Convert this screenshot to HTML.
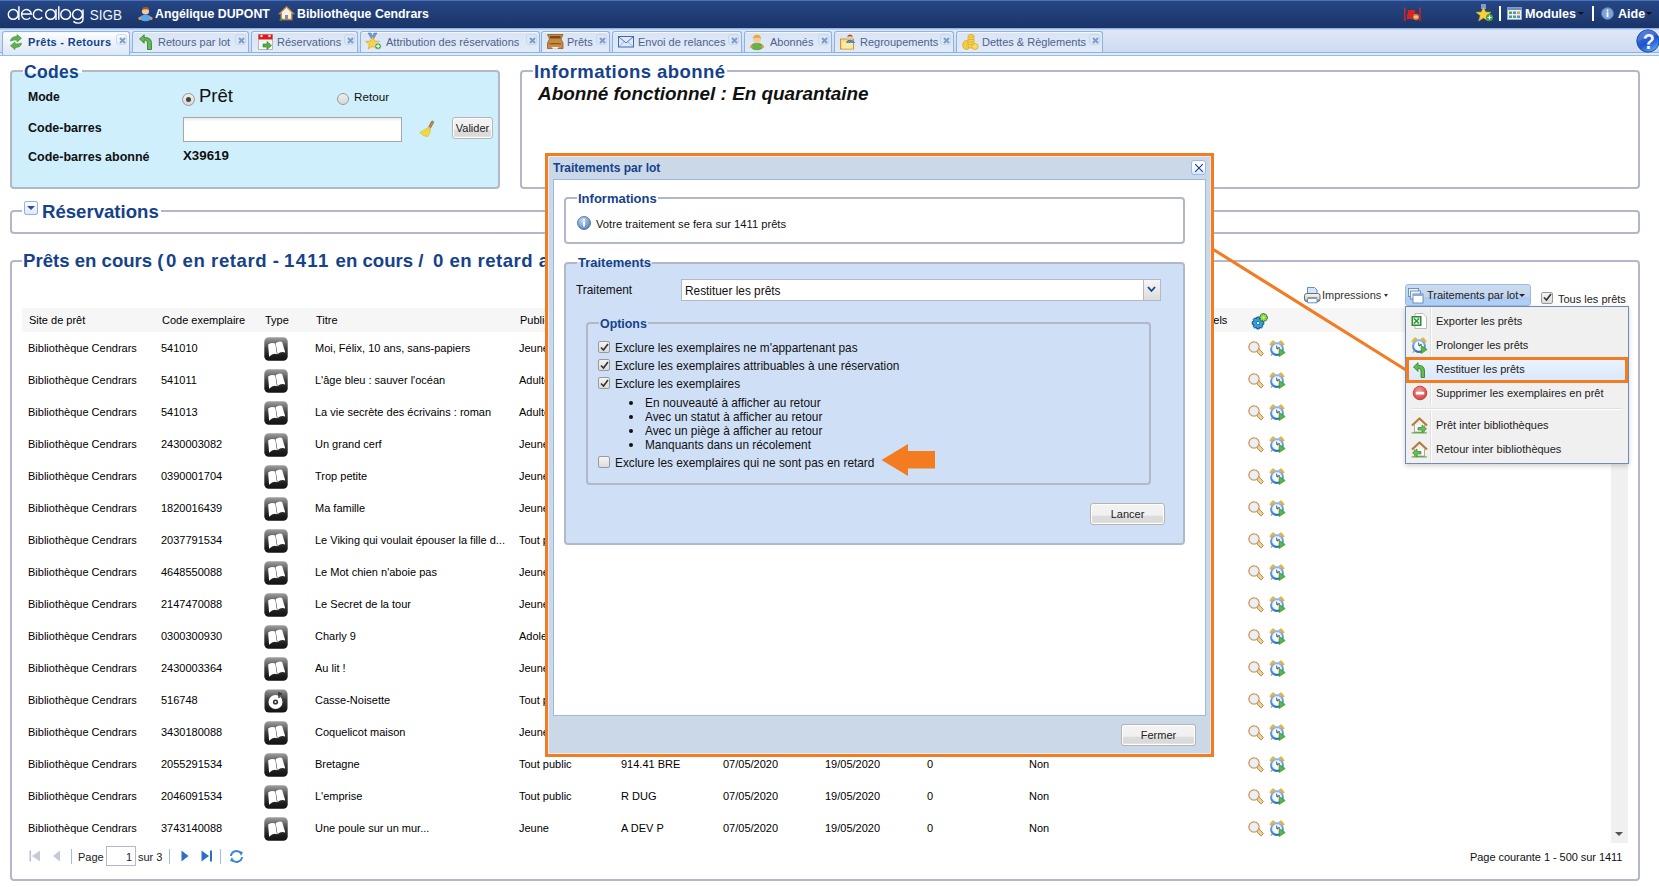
<!DOCTYPE html>
<html><head><meta charset="utf-8"><style>
*{box-sizing:border-box}
html,body{margin:0;padding:0;width:1659px;height:887px;overflow:hidden;background:#fff;font-family:"Liberation Sans",sans-serif}
body{position:relative}
.a{position:absolute;white-space:nowrap;line-height:1}
svg{position:absolute;overflow:visible}
#hdr{position:absolute;left:0;top:0;width:1659px;height:28px;background:linear-gradient(#264785,#1a3468);border-top:1px solid #4d74b8}
#tabbar{position:absolute;left:0;top:28px;width:1659px;height:24px;background:linear-gradient(#dfe8f6,#cddaf0);border-top:1px solid #92b5e5;box-shadow:inset 0 1px #bcd2ef}
#spacer{position:absolute;left:0;top:52px;width:1659px;height:4px;background:#e1ebfa;border-top:1px solid #8db2e3;border-bottom:1px solid #99bbe8}
.tab{position:absolute;top:31px;height:21px;border:1px solid #8db2e3;border-bottom:none;border-radius:3px 3px 0 0;background:linear-gradient(#d9e5f5,#e1ebf9);box-shadow:inset 0 1px #f4f8fd;font-size:11px;color:#50608c}
.tab.act{background:linear-gradient(#ffffff,#f4f8fd 20%,#dce8f8);height:24px;color:#15428b;font-weight:bold;font-size:11px;letter-spacing:0.3px}
.tab .t{position:absolute;top:5px;line-height:1;white-space:nowrap}
.tab .x{position:absolute;top:2px;width:11px;height:11px;border:1px solid #c5d8f0;border-radius:3px;}
.fs{position:absolute;border:2px solid #b3b8c9;border-radius:4px}
.lg{position:absolute;background:#fff;color:#15428b;font-weight:bold;white-space:nowrap;line-height:1;padding:0 1px}
.cell{position:absolute;font-size:11px;color:#000;white-space:nowrap;line-height:1}
.hd{position:absolute;font-size:11px;color:#000;white-space:nowrap;line-height:1;top:315px}
.btn{position:absolute;border:1px solid #b4b4b4;border-radius:3px;box-shadow:inset 0 0 0 1px #fff;background:linear-gradient(#f3f3f3 0%,#f0f0f0 57%,#dcdcdc 59%,#dadada 88%,#efefef 100%);font-size:11px;color:#222;text-align:center;line-height:1}
.mi{position:absolute;left:1436px;font-size:11px;color:#222;white-space:nowrap;line-height:1}
.dt{position:absolute;font-size:11.85px;color:#111;white-space:nowrap;line-height:1}
.cb{position:absolute;width:12px;height:12px;border:1px solid #9a9a9a;border-radius:2px;background:linear-gradient(#f4f4f4,#dcdcdc)}
</style></head><body>
<div id="hdr"></div>
<svg style="left:0;top:0" width="130" height="28" viewBox="0 0 130 28"><g stroke="#fff" stroke-width="1.45" fill="none">
<circle cx="13.2" cy="14.4" r="4.9"/><path d="M18.9 6.2 V19.9"/>
<path d="M21.5 14 H31.3 A4.9 4.9 0 1 0 30.2 17.6"/>
<path d="M42.2 11.5 A4.9 4.9 0 1 0 42.2 17.3"/>
<circle cx="50.6" cy="14.4" r="4.9"/><path d="M56 9.2 V19.9"/>
<path d="M58.8 6.2 V19.8"/>
<circle cx="65.7" cy="14.4" r="4.9"/>
<circle cx="77.5" cy="14.4" r="4.9"/><path d="M83 9.6 V19 Q83 23.1 78.2 23.1 Q75.2 23.1 73.4 21.4"/>
</g><text x="89.8" y="20" font-family="Liberation Sans" font-size="15" fill="#eef1f7" textLength="32.2" lengthAdjust="spacingAndGlyphs">SIGB</text></svg>
<svg style="left:138px;top:6px" width="15" height="15" viewBox="0 0 15 15"><ellipse cx="7.5" cy="12" rx="6" ry="3.2" fill="#58a6ee"/><circle cx="1.8" cy="12.5" r="1.4" fill="#f19a3e"/><circle cx="13.2" cy="12.5" r="1.4" fill="#f19a3e"/><circle cx="7.5" cy="5" r="3.6" fill="#f5c9a0"/><path d="M3.8 4.5 Q4 0.8 7.5 0.8 Q11 0.8 11.2 4.5 Q9 3 7.5 3.4 Q6 3 3.8 4.5Z" fill="#9a5a28"/></svg>
<div class="a" style="left:155px;top:8px;font-size:12.3px;font-weight:bold;color:#fff">Angélique DUPONT</div>
<svg style="left:279px;top:6px" width="15" height="15" viewBox="0 0 15 15"><path d="M7.5 0.8 L14.5 7.5 L12.8 7.5 L12.8 13.5 L2.2 13.5 L2.2 7.5 L0.5 7.5 Z" fill="#f4f0e8" stroke="#c9853d" stroke-width="1.3"/><rect x="6" y="9" width="3" height="4.5" fill="#8a8a8a"/><path d="M0.5 14 L4 13.5" stroke="#3aa040" stroke-width="1.3"/></svg>
<div class="a" style="left:297px;top:8px;font-size:12.3px;font-weight:bold;color:#fff">Bibliothèque Cendrars</div>
<svg style="left:1404px;top:8px" width="17" height="13" viewBox="0 0 17 13"><path d="M1.5 0.5 L0.8 0.5 L0.8 12 L2 12 M15 0.5 L16 0.5 L16 12 L15 12" stroke="#e02020" stroke-width="1.4" fill="none"/><rect x="4" y="2" width="7" height="6" fill="#e02020"/><rect x="3" y="6" width="9" height="5" fill="#d02828"/><circle cx="12" cy="9" r="3" fill="#f08a30"/><rect x="10.3" y="8.5" width="3.4" height="1" fill="#fff"/></svg>
<svg style="left:1476px;top:4px" width="18" height="18" viewBox="0 0 18 18"><rect x="5" y="0" width="5" height="5" fill="#7a9ccf"/><path d="M7.5 3 L9.6 8 L15 8.3 L10.8 11.6 L12.3 17 L7.5 14 L2.7 17 L4.2 11.6 L0 8.3 L5.4 8 Z" fill="#f6d23c" stroke="#d9a21a" stroke-width="0.6"/><circle cx="13.5" cy="13.5" r="3.5" fill="#3aa53a"/><path d="M13.5 11.5 V15.5 M11.5 13.5 H15.5" stroke="#fff" stroke-width="1.2"/></svg>
<div class="a" style="left:1499px;top:6px;width:2px;height:15px;background:#fff"></div>
<svg style="left:1507px;top:7px" width="15" height="13" viewBox="0 0 15 13"><rect x="0.5" y="0.5" width="14" height="12" fill="#e8eef8" stroke="#9ab" stroke-width="1"/><rect x="0.5" y="0.5" width="14" height="2.5" fill="#6f8fc0"/><rect x="2" y="4.5" width="3" height="2.5" fill="#58a840"/><rect x="6" y="4.5" width="3" height="2.5" fill="#4a8fd8"/><rect x="10" y="4.5" width="3" height="2.5" fill="#e8a030"/><rect x="2" y="8.5" width="3" height="2.5" fill="#4a8fd8"/><rect x="6" y="8.5" width="3" height="2.5" fill="#58a840"/><rect x="10" y="8.5" width="3" height="2.5" fill="#4a8fd8"/></svg>
<div class="a" style="left:1525px;top:8px;font-size:12.6px;font-weight:bold;color:#fff">Modules</div>
<div class="a" style="left:1578px;top:12px;width:0;height:0;border-left:3px solid transparent;border-right:3px solid transparent;border-top:3.5px solid #0a0f1a"></div>
<div class="a" style="left:1592px;top:6px;width:2px;height:15px;background:#fff"></div>
<svg style="left:1601px;top:7px" width="13" height="13" viewBox="0 0 13 13"><circle cx="6.5" cy="6.5" r="6" fill="#7ea4d4" stroke="#4c78b8" stroke-width="0.8"/><circle cx="6.5" cy="3.5" r="1" fill="#fff"/><rect x="5.6" y="5.2" width="1.8" height="5" fill="#fff"/></svg>
<div class="a" style="left:1618px;top:8px;font-size:12.6px;font-weight:bold;color:#fff">Aide</div>
<div class="a" style="left:1646px;top:12px;width:0;height:0;border-left:3px solid transparent;border-right:3px solid transparent;border-top:3.5px solid #0a0f1a"></div>
<div id="tabbar"></div>
<div id="spacer"></div>
<div class="tab act" style="left:2px;top:31px;width:128px"><div class="t" style="left:25px">Prêts - Retours</div><div class="x" style="left:113px"><svg style="left:1.5px;top:1.5px" width="7" height="7" viewBox="0 0 7 7"><path d="M1 1 L6 6 M6 1 L1 6" stroke="#7f9bc9" stroke-width="2"/></svg></div></div>
<svg style="left:8px;top:34px" width="17" height="17" viewBox="0 0 17 17"><path d="M2.5 7 Q3 2.5 9 2.5 L9 0.5 L13.5 4.3 L9 8 L9 6 Q5 5.8 2.5 7Z" fill="#62b24e" stroke="#3a8a2e" stroke-width="0.6"/><path d="M13.5 9 Q13 13.5 7 13.5 L7 15.5 L2.5 11.7 L7 8 L7 10 Q11 10.2 13.5 9Z" fill="#62b24e" stroke="#3a8a2e" stroke-width="0.6"/></svg>
<div class="tab" style="left:132px;top:31px;width:117px"><div class="t" style="left:25px">Retours par lot</div><div class="x" style="left:102px"><svg style="left:1.5px;top:1.5px" width="7" height="7" viewBox="0 0 7 7"><path d="M1 1 L6 6 M6 1 L1 6" stroke="#7f9bc9" stroke-width="2"/></svg></div></div>
<svg style="left:139px;top:34px" width="14" height="16" viewBox="0 0 14 16"><path d="M8.5 15.5 V9 Q8.5 6 5.8 6 H5.2 V9.2 L0.6 5 L5.2 0.8 V3.6 H6.2 Q12.5 3.6 12.5 9.5 V15.5 Z" fill="#66b850" stroke="#2b7a22" stroke-width="0.8"/></svg>
<div class="tab" style="left:251px;top:31px;width:107px"><div class="t" style="left:25px">Réservations</div><div class="x" style="left:92px"><svg style="left:1.5px;top:1.5px" width="7" height="7" viewBox="0 0 7 7"><path d="M1 1 L6 6 M6 1 L1 6" stroke="#7f9bc9" stroke-width="2"/></svg></div></div>
<svg style="left:258px;top:34px" width="15" height="16" viewBox="0 0 15 16"><rect x="0.5" y="0.5" width="14" height="15" fill="#f6f6f6" stroke="#aaa" stroke-width="0.8"/><rect x="0.5" y="0.5" width="14" height="5" fill="#e01818"/><circle cx="3.5" cy="2" r="1.2" fill="#eee"/><circle cx="11.5" cy="2" r="1.2" fill="#eee"/><path d="M5 10 H9 V7.5 L13.5 11.5 L9 15.5 V13 H5 Z" fill="#59b23e" stroke="#2b7a22" stroke-width="0.6"/></svg>
<div class="tab" style="left:360px;top:31px;width:180px"><div class="t" style="left:25px">Attribution des réservations</div><div class="x" style="left:165px"><svg style="left:1.5px;top:1.5px" width="7" height="7" viewBox="0 0 7 7"><path d="M1 1 L6 6 M6 1 L1 6" stroke="#7f9bc9" stroke-width="2"/></svg></div></div>
<svg style="left:365px;top:33px" width="17" height="17" viewBox="0 0 17 17"><path d="M3 0 H6 L7.5 3.5 L9 0 H12 L8.5 6 H6.5 Z" fill="#6a98d0" stroke="#4a78b8" stroke-width="0.5"/><path d="M7.5 3.5 L9.5 8 L14.5 8.4 L10.6 11.5 L12 16 L7.5 13.5 L3 16 L4.4 11.5 L0.5 8.4 L5.5 8 Z" fill="#f7d24a" stroke="#d8a020" stroke-width="0.6"/><circle cx="13" cy="13.2" r="3.3" fill="#3b9a3b" stroke="#fff" stroke-width="0.6"/><path d="M13 11.2 V15.2 M11 13.2 H15" stroke="#fff" stroke-width="1.2"/></svg>
<div class="tab" style="left:541px;top:31px;width:69px"><div class="t" style="left:25px">Prêts</div><div class="x" style="left:54px"><svg style="left:1.5px;top:1.5px" width="7" height="7" viewBox="0 0 7 7"><path d="M1 1 L6 6 M6 1 L1 6" stroke="#7f9bc9" stroke-width="2"/></svg></div></div>
<svg style="left:547px;top:34px" width="17" height="16" viewBox="0 0 17 16"><path d="M0.5 0.5 H16 L14 5 L16 9 V14.5 H0.5 V9 L2.5 5 Z" fill="#c98a44" stroke="#8a5a22" stroke-width="0.8"/><rect x="3" y="2" width="10.5" height="2.5" fill="#7a4a1a"/><rect x="2.5" y="9" width="11.5" height="1.3" fill="#8a5a22"/><path d="M5 13 Q8 16.5 11.5 13" stroke="#ddd" stroke-width="1.5" fill="#fff"/></svg>
<div class="tab" style="left:612px;top:31px;width:130px"><div class="t" style="left:25px">Envoi de relances</div><div class="x" style="left:115px"><svg style="left:1.5px;top:1.5px" width="7" height="7" viewBox="0 0 7 7"><path d="M1 1 L6 6 M6 1 L1 6" stroke="#7f9bc9" stroke-width="2"/></svg></div></div>
<svg style="left:618px;top:36px" width="16" height="11" viewBox="0 0 16 11"><rect x="0.5" y="0.5" width="15" height="10.5" fill="#dfe8f6" stroke="#3d6cb0" stroke-width="1"/><path d="M1 1 L8 7 L15 1" stroke="#3d6cb0" stroke-width="0.9" fill="none"/><path d="M1 10.5 L6 6 M15 10.5 L10 6" stroke="#8aa8d8" stroke-width="0.8"/></svg>
<div class="tab" style="left:744px;top:31px;width:88px"><div class="t" style="left:25px">Abonnés</div><div class="x" style="left:73px"><svg style="left:1.5px;top:1.5px" width="7" height="7" viewBox="0 0 7 7"><path d="M1 1 L6 6 M6 1 L1 6" stroke="#7f9bc9" stroke-width="2"/></svg></div></div>
<svg style="left:749px;top:34px" width="16" height="16" viewBox="0 0 16 16"><ellipse cx="8" cy="12.5" rx="6" ry="3.3" fill="#6ab04a" stroke="#3f8a2a" stroke-width="0.6"/><circle cx="2.2" cy="12.8" r="1.4" fill="#f19a3e"/><circle cx="13.8" cy="12.8" r="1.4" fill="#f19a3e"/><circle cx="8" cy="5.5" r="3.8" fill="#f5caa2"/><path d="M4 5 Q4 0.8 8 0.8 Q12 0.8 12 5 Q10 3.2 8 3.8 Q6 3.2 4 5Z" fill="#f0a82a"/></svg>
<div class="tab" style="left:834px;top:31px;width:120px"><div class="t" style="left:25px">Regroupements</div><div class="x" style="left:105px"><svg style="left:1.5px;top:1.5px" width="7" height="7" viewBox="0 0 7 7"><path d="M1 1 L6 6 M6 1 L1 6" stroke="#7f9bc9" stroke-width="2"/></svg></div></div>
<svg style="left:840px;top:34px" width="16" height="16" viewBox="0 0 16 16"><rect x="0.5" y="5" width="13" height="10" fill="#f5dd88" stroke="#e0902a" stroke-width="1"/><rect x="2" y="8" width="11" height="6.5" fill="#fbeaa0"/><circle cx="10" cy="3.5" r="2.8" fill="#f2c8a0"/><path d="M7.3 3 Q7.5 0.5 10 0.5 Q12.5 0.5 12.7 3 Q11 2 10 2.3 Q9 2 7.3 3Z" fill="#9a5a28"/><path d="M6.5 9 Q7 6 10 6 Q13 6 15 9" fill="#4a90d8" stroke="#2a60a8" stroke-width="0.6"/></svg>
<div class="tab" style="left:956px;top:31px;width:147px"><div class="t" style="left:25px">Dettes &amp; Règlements</div><div class="x" style="left:132px"><svg style="left:1.5px;top:1.5px" width="7" height="7" viewBox="0 0 7 7"><path d="M1 1 L6 6 M6 1 L1 6" stroke="#7f9bc9" stroke-width="2"/></svg></div></div>
<svg style="left:962px;top:34px" width="17" height="16" viewBox="0 0 17 16"><ellipse cx="4.5" cy="11" rx="3.8" ry="4.5" fill="#f3cb45" stroke="#d9a020" stroke-width="0.7"/><rect x="6" y="0.5" width="6" height="13.5" rx="2" fill="#f5d24e" stroke="#d9a020" stroke-width="0.7"/><path d="M6.5 3 H11.5 M6.5 5.5 H11.5 M6.5 8 H11.5 M6.5 10.5 H11.5" stroke="#d9a020" stroke-width="0.6"/><ellipse cx="13" cy="12.5" rx="3.2" ry="3" fill="#f7da60" stroke="#d9a020" stroke-width="0.7"/></svg>
<svg style="left:1635px;top:28px" width="26" height="26" viewBox="0 0 26 26"><defs><linearGradient id="hg" x1="0.2" y1="0" x2="0.8" y2="1"><stop offset="0" stop-color="#3f72d6"/><stop offset="0.55" stop-color="#1f55cc"/><stop offset="1" stop-color="#5fb0f4"/></linearGradient></defs><circle cx="13" cy="13" r="11.2" fill="url(#hg)" stroke="#1d4aa8" stroke-width="0.9"/><path d="M2.5 14 Q10 9 24 6 Q20 1.5 13 1.8 Q4 2.5 2.5 14Z" fill="#ffffff" opacity="0.12"/><text x="13.8" y="20.8" font-family="Liberation Sans" font-weight="bold" font-size="22" fill="#f4f4f8" text-anchor="middle" transform="translate(13.8 0) scale(0.9 1) translate(-13.8 0)">?</text></svg>
<div class="fs" style="left:10px;top:70px;width:490px;height:119px;background:#cfeffc"></div>
<div class="lg" style="left:23px;top:64px;font-size:17.5px;letter-spacing:0.3px;padding:0 3px 0 1px;background:linear-gradient(#fff 50%,#cfeffc 50%)">Codes</div>
<div class="a" style="left:28px;top:91px;font-size:12.2px;font-weight:bold;color:#111">Mode</div>
<div class="a" style="left:182px;top:93px;width:13px;height:13px;border:1px solid #9a9a9a;border-radius:50%;background:linear-gradient(#eee,#d8d8d8)"><div style="position:absolute;left:3px;top:3px;width:5px;height:5px;border-radius:50%;background:#444"></div></div>
<div class="a" style="left:199px;top:87px;font-size:18.5px;color:#111">Prêt</div>
<div class="a" style="left:337px;top:93px;width:12px;height:12px;border:1px solid #9a9a9a;border-radius:50%;background:linear-gradient(#eee,#d8d8d8)"></div>
<div class="a" style="left:354px;top:91px;font-size:11.7px;color:#111">Retour</div>
<div class="a" style="left:28px;top:122px;font-size:12.5px;font-weight:bold;color:#111">Code-barres</div>
<div class="a" style="left:183px;top:117px;width:219px;height:25px;border:1px solid #a8a8a8;background:linear-gradient(#ececec,#fff 4px)"></div>
<svg style="left:419px;top:120px" width="17" height="18" viewBox="0 0 17 18"><path d="M13.5 1 Q15 1.2 14.6 2.6 L11.6 8 L9.6 7 L12.4 1.6 Q12.8 0.9 13.5 1Z" fill="#c08a3a" stroke="#8a5a20" stroke-width="0.6"/><path d="M9.2 6.6 L12.2 8.2 L11.6 9.2 L8.6 7.8Z" fill="#e8b0c0"/><path d="M8.6 7.8 L11.6 9.3 Q11 14 9 16.5 Q5 17 0.8 12.6 Q4.5 10.5 8.6 7.8Z" fill="#f4dc48" stroke="#d8b020" stroke-width="0.6"/><path d="M4 13 L9.5 9.5 M6 15 L10.2 10.5" stroke="#e0c030" stroke-width="0.6"/></svg>
<div class="btn" style="left:452px;top:117px;width:41px;height:22px;padding-top:5px;font-size:11px">Valider</div>
<div class="a" style="left:28px;top:151px;font-size:12.5px;font-weight:bold;color:#111">Code-barres abonné</div>
<div class="a" style="left:183px;top:149px;font-size:13.3px;font-weight:bold;color:#111">X39619</div>
<div class="fs" style="left:520px;top:70px;width:1120px;height:119px"></div>
<div class="lg" style="left:533px;top:63px;font-size:18.5px;letter-spacing:0.45px">Informations abonné</div>
<div class="a" style="left:538px;top:85px;font-size:18.9px;font-weight:bold;font-style:italic;color:#111">Abonné fonctionnel : En quarantaine</div>
<div class="fs" style="left:10px;top:210px;width:1630px;height:24px"></div>
<div class="a" style="left:22px;top:200px;width:139px;height:18px;background:#fff"></div>
<div class="a" style="left:24px;top:201px;width:14px;height:14px;border:1px solid #8db2e3;border-radius:2px;background:linear-gradient(#fff,#dde8f6)"><div style="position:absolute;left:2px;top:4px;border-left:4px solid transparent;border-right:4px solid transparent;border-top:4.5px solid #3548a8"></div></div>
<div class="lg" style="left:41px;top:203px;font-size:18.6px">Réservations</div>
<div class="fs" style="left:10px;top:260px;width:1630px;height:621px"></div>
<div class="a" style="left:22px;top:252px;width:523px;height:18px;background:#fff"></div>
<div class="lg" style="left:23px;top:252px;font-size:18.6px;letter-spacing:0px;background:transparent;padding:0">Prêts en cours (</div>
<div class="lg" style="left:166px;top:252px;font-size:18.6px;letter-spacing:0.55px;background:transparent;padding:0">0 en retard -</div>
<div class="lg" style="left:284px;top:252px;font-size:18.6px;letter-spacing:1.3px;background:transparent;padding:0">1411</div>
<div class="lg" style="left:335.6px;top:252px;font-size:18.6px;letter-spacing:0px;background:transparent;padding:0">en cours /</div>
<div class="lg" style="left:433px;top:252px;font-size:18.6px;letter-spacing:0.45px;background:transparent;padding:0">0 en retard au total)</div>
<svg style="left:1304px;top:287px" width="17" height="17" viewBox="0 0 17 17"><defs><linearGradient id="pg" x1="0" y1="0" x2="0" y2="1"><stop offset="0" stop-color="#fafafa"/><stop offset="0.6" stop-color="#d8d8d8"/><stop offset="1" stop-color="#8a8a8a"/></linearGradient></defs><path d="M3.5 0.5 H10.5 L13 3 V8 H3.5 Z" fill="#d6e6f8" stroke="#4a88cc" stroke-width="0.9"/><rect x="0.5" y="6.5" width="15.5" height="8" rx="2.2" fill="url(#pg)" stroke="#5a5a5a" stroke-width="0.9"/><rect x="3.5" y="10" width="9.5" height="2.2" fill="#999"/><path d="M3.5 12 V15.8 H13 V12" fill="#fff" stroke="#4a88cc" stroke-width="0.9"/></svg>
<div class="a" style="left:1322px;top:290px;font-size:11px;color:#333">Impressions</div>
<div class="a" style="left:1384px;top:294px;border-left:2.5px solid transparent;border-right:2.5px solid transparent;border-top:3px solid #333"></div>
<div class="a" style="left:1405px;top:284px;width:126px;height:22px;border:1px solid #99bbe8;border-radius:3px;background:linear-gradient(#cddbee 0%,#c3d5ee 58%,#a9caf4 60%,#b4d2f6 100%)"></div>
<svg style="left:1408px;top:288px" width="16" height="16" viewBox="0 0 16 16"><rect x="0.5" y="0.5" width="10" height="8" fill="#eef3fa" stroke="#6688bb" stroke-width="0.9"/><rect x="2.5" y="3" width="10" height="8" fill="#eef3fa" stroke="#6688bb" stroke-width="0.9"/><rect x="5" y="6" width="10" height="9" fill="#fff" stroke="#6688bb" stroke-width="0.9"/><rect x="5" y="6" width="10" height="2" fill="#8aaad8"/></svg>
<div class="a" style="left:1427px;top:290px;font-size:11px;color:#222">Traitements par lot</div>
<div class="a" style="left:1519px;top:294px;border-left:3px solid transparent;border-right:3px solid transparent;border-top:3.5px solid #222"></div>
<div class="cb" style="left:1541px;top:292px"></div>
<svg style="left:1543px;top:293px" width="9" height="9" viewBox="0 0 9 9"><path d="M1 4.5 L3.5 7 L8 1" stroke="#333" stroke-width="1.6" fill="none"/></svg>
<div class="a" style="left:1558px;top:294px;font-size:11px;color:#222">Tous les prêts</div>
<div class="a" style="left:22px;top:308px;width:1589px;height:24px;background:#f6f6f6"></div>
<div class="hd" style="left:29px">Site de prêt</div>
<div class="hd" style="left:162px">Code exemplaire</div>
<div class="hd" style="left:265px">Type</div>
<div class="hd" style="left:316px">Titre</div>
<div class="hd" style="left:520px">Public</div>
<div class="hd" style="left:621px">Cote</div>
<div class="hd" style="left:723px">Date de prêt</div>
<div class="hd" style="left:825px">Date de retour</div>
<div class="hd" style="left:928px">Nb prol.</div>
<div class="hd" style="left:1029px">Réservé</div>
<div class="hd" style="left:1187px">Rappels</div>
<svg style="left:1251px;top:313px" width="18" height="16" viewBox="0 0 18 16"><g transform="translate(7,10)"><path d="M-1.2 -6 H1.2 L1.6 -4.2 L3.2 -5.2 L4.9 -3.5 L3.9 -1.9 L5.8 -1.4 V1.4 L3.9 1.9 L4.9 3.5 L3.2 5.2 L1.6 4.2 L1.2 6 H-1.2 L-1.6 4.2 L-3.2 5.2 L-4.9 3.5 L-3.9 1.9 L-5.8 1.4 V-1.4 L-3.9 -1.9 L-4.9 -3.5 L-3.2 -5.2 L-1.6 -4.2 Z" fill="#29a3e6" stroke="#1a3a5a" stroke-width="0.8"/><circle r="1.6" fill="#fff" stroke="#1a3a5a" stroke-width="0.6"/></g><g transform="translate(12.5,4.5)"><path d="M-0.8 -4 H0.8 L1.1 -2.8 L2.2 -3.5 L3.4 -2.3 L2.7 -1.2 L4 -0.9 V0.9 L2.7 1.2 L3.4 2.3 L2.2 3.5 L1.1 2.8 L0.8 4 H-0.8 L-1.1 2.8 L-2.2 3.5 L-3.4 2.3 L-2.7 1.2 L-4 0.9 V-0.9 L-2.7 -1.2 L-3.4 -2.3 L-2.2 -3.5 L-1.1 -2.8 Z" fill="#8ee04a" stroke="#2a5a1a" stroke-width="0.7"/><circle r="1" fill="#d8f8b0"/></g></svg>
<div class="a" style="left:1611px;top:332px;width:17px;height:511px;background:#f0f0f0"></div>
<div class="a" style="left:1615px;top:832px;border-left:4px solid transparent;border-right:4px solid transparent;border-top:4px solid #555"></div>
<div class="cell" style="left:28px;top:343px">Bibliothèque Cendrars</div>
<div class="cell" style="left:161px;top:343px">541010</div>
<svg style="left:264px;top:337px" width="24" height="24" viewBox="0 0 24 24"><defs><linearGradient id="bg337" x1="0" y1="0" x2="0" y2="1"><stop offset="0" stop-color="#a0a0a0"/><stop offset="0.5" stop-color="#3a3a3a"/><stop offset="0.8" stop-color="#1c1c1c"/><stop offset="1" stop-color="#141414"/></linearGradient></defs><rect x="0.3" y="0.3" width="23.4" height="23.4" rx="4.5" fill="url(#bg337)"/><path d="M4.1 7.4 Q8 5.2 11.2 6.5 L13 17.3 Q9.3 15.6 5.1 19.8 Z" fill="#fff"/><path d="M11.7 6.3 Q15 3.6 18.1 5.1 L21.3 15.5 Q17 14 13.5 17.2 Z" fill="#fff"/></svg>
<div class="cell" style="left:315px;top:343px">Moi, Félix, 10 ans, sans-papiers</div>
<div class="cell" style="left:519px;top:343px">Jeune</div>
<svg style="left:1247px;top:341px" width="17" height="17" viewBox="0 0 17 17"><path d="M9.4 10.2 L11.9 7.7 L16.4 12.6 L13.9 15.1 Z" fill="#e9d39a" stroke="#c07a3e" stroke-width="0.9"/><circle cx="7" cy="6" r="5.1" fill="#e8f1fb" stroke="#d09552" stroke-width="1.3"/></svg>
<svg style="left:1269px;top:340px" width="17" height="17" viewBox="0 0 17 17"><defs><linearGradient id="cl340" x1="0" y1="0" x2="0" y2="1"><stop offset="0" stop-color="#8ec4f2"/><stop offset="1" stop-color="#2a66b8"/></linearGradient></defs><path d="M0.6 4.4 L3 1.2 Q4 0.3 5 1 L6.2 2.2 L2.4 5.6 Z" fill="#f3b81e" stroke="#e2a412" stroke-width="0.5"/><path d="M15.4 4.4 L13 1.2 Q12 0.3 11 1 L9.8 2.2 L13.6 5.6 Z" fill="#f3b81e" stroke="#e2a412" stroke-width="0.5"/><circle cx="8" cy="9" r="6.9" fill="url(#cl340)"/><circle cx="8" cy="9" r="5.1" fill="#cfe4f8"/><circle cx="8" cy="9" r="4.2" fill="#f6f9fd"/><path d="M8 9 L7.6 5.6 M8 9 L10.6 7.2" stroke="#555" stroke-width="1.1"/><path d="M10.2 8.6 L16.2 12.5 L10.2 16.5 Z" fill="#56ba4a" stroke="#2d8a2a" stroke-width="0.7"/><path d="M1.8 15.6 L3.6 13.6" stroke="#999" stroke-width="1.1"/></svg>
<div class="cell" style="left:28px;top:375px">Bibliothèque Cendrars</div>
<div class="cell" style="left:161px;top:375px">541011</div>
<svg style="left:264px;top:369px" width="24" height="24" viewBox="0 0 24 24"><defs><linearGradient id="bg369" x1="0" y1="0" x2="0" y2="1"><stop offset="0" stop-color="#a0a0a0"/><stop offset="0.5" stop-color="#3a3a3a"/><stop offset="0.8" stop-color="#1c1c1c"/><stop offset="1" stop-color="#141414"/></linearGradient></defs><rect x="0.3" y="0.3" width="23.4" height="23.4" rx="4.5" fill="url(#bg369)"/><path d="M4.1 7.4 Q8 5.2 11.2 6.5 L13 17.3 Q9.3 15.6 5.1 19.8 Z" fill="#fff"/><path d="M11.7 6.3 Q15 3.6 18.1 5.1 L21.3 15.5 Q17 14 13.5 17.2 Z" fill="#fff"/></svg>
<div class="cell" style="left:315px;top:375px">L'âge bleu : sauver l'océan</div>
<div class="cell" style="left:519px;top:375px">Adulte</div>
<svg style="left:1247px;top:373px" width="17" height="17" viewBox="0 0 17 17"><path d="M9.4 10.2 L11.9 7.7 L16.4 12.6 L13.9 15.1 Z" fill="#e9d39a" stroke="#c07a3e" stroke-width="0.9"/><circle cx="7" cy="6" r="5.1" fill="#e8f1fb" stroke="#d09552" stroke-width="1.3"/></svg>
<svg style="left:1269px;top:372px" width="17" height="17" viewBox="0 0 17 17"><defs><linearGradient id="cl372" x1="0" y1="0" x2="0" y2="1"><stop offset="0" stop-color="#8ec4f2"/><stop offset="1" stop-color="#2a66b8"/></linearGradient></defs><path d="M0.6 4.4 L3 1.2 Q4 0.3 5 1 L6.2 2.2 L2.4 5.6 Z" fill="#f3b81e" stroke="#e2a412" stroke-width="0.5"/><path d="M15.4 4.4 L13 1.2 Q12 0.3 11 1 L9.8 2.2 L13.6 5.6 Z" fill="#f3b81e" stroke="#e2a412" stroke-width="0.5"/><circle cx="8" cy="9" r="6.9" fill="url(#cl372)"/><circle cx="8" cy="9" r="5.1" fill="#cfe4f8"/><circle cx="8" cy="9" r="4.2" fill="#f6f9fd"/><path d="M8 9 L7.6 5.6 M8 9 L10.6 7.2" stroke="#555" stroke-width="1.1"/><path d="M10.2 8.6 L16.2 12.5 L10.2 16.5 Z" fill="#56ba4a" stroke="#2d8a2a" stroke-width="0.7"/><path d="M1.8 15.6 L3.6 13.6" stroke="#999" stroke-width="1.1"/></svg>
<div class="cell" style="left:28px;top:407px">Bibliothèque Cendrars</div>
<div class="cell" style="left:161px;top:407px">541013</div>
<svg style="left:264px;top:401px" width="24" height="24" viewBox="0 0 24 24"><defs><linearGradient id="bg401" x1="0" y1="0" x2="0" y2="1"><stop offset="0" stop-color="#a0a0a0"/><stop offset="0.5" stop-color="#3a3a3a"/><stop offset="0.8" stop-color="#1c1c1c"/><stop offset="1" stop-color="#141414"/></linearGradient></defs><rect x="0.3" y="0.3" width="23.4" height="23.4" rx="4.5" fill="url(#bg401)"/><path d="M4.1 7.4 Q8 5.2 11.2 6.5 L13 17.3 Q9.3 15.6 5.1 19.8 Z" fill="#fff"/><path d="M11.7 6.3 Q15 3.6 18.1 5.1 L21.3 15.5 Q17 14 13.5 17.2 Z" fill="#fff"/></svg>
<div class="cell" style="left:315px;top:407px">La vie secrète des écrivains : roman</div>
<div class="cell" style="left:519px;top:407px">Adulte</div>
<svg style="left:1247px;top:405px" width="17" height="17" viewBox="0 0 17 17"><path d="M9.4 10.2 L11.9 7.7 L16.4 12.6 L13.9 15.1 Z" fill="#e9d39a" stroke="#c07a3e" stroke-width="0.9"/><circle cx="7" cy="6" r="5.1" fill="#e8f1fb" stroke="#d09552" stroke-width="1.3"/></svg>
<svg style="left:1269px;top:404px" width="17" height="17" viewBox="0 0 17 17"><defs><linearGradient id="cl404" x1="0" y1="0" x2="0" y2="1"><stop offset="0" stop-color="#8ec4f2"/><stop offset="1" stop-color="#2a66b8"/></linearGradient></defs><path d="M0.6 4.4 L3 1.2 Q4 0.3 5 1 L6.2 2.2 L2.4 5.6 Z" fill="#f3b81e" stroke="#e2a412" stroke-width="0.5"/><path d="M15.4 4.4 L13 1.2 Q12 0.3 11 1 L9.8 2.2 L13.6 5.6 Z" fill="#f3b81e" stroke="#e2a412" stroke-width="0.5"/><circle cx="8" cy="9" r="6.9" fill="url(#cl404)"/><circle cx="8" cy="9" r="5.1" fill="#cfe4f8"/><circle cx="8" cy="9" r="4.2" fill="#f6f9fd"/><path d="M8 9 L7.6 5.6 M8 9 L10.6 7.2" stroke="#555" stroke-width="1.1"/><path d="M10.2 8.6 L16.2 12.5 L10.2 16.5 Z" fill="#56ba4a" stroke="#2d8a2a" stroke-width="0.7"/><path d="M1.8 15.6 L3.6 13.6" stroke="#999" stroke-width="1.1"/></svg>
<div class="cell" style="left:28px;top:439px">Bibliothèque Cendrars</div>
<div class="cell" style="left:161px;top:439px">2430003082</div>
<svg style="left:264px;top:433px" width="24" height="24" viewBox="0 0 24 24"><defs><linearGradient id="bg433" x1="0" y1="0" x2="0" y2="1"><stop offset="0" stop-color="#a0a0a0"/><stop offset="0.5" stop-color="#3a3a3a"/><stop offset="0.8" stop-color="#1c1c1c"/><stop offset="1" stop-color="#141414"/></linearGradient></defs><rect x="0.3" y="0.3" width="23.4" height="23.4" rx="4.5" fill="url(#bg433)"/><path d="M4.1 7.4 Q8 5.2 11.2 6.5 L13 17.3 Q9.3 15.6 5.1 19.8 Z" fill="#fff"/><path d="M11.7 6.3 Q15 3.6 18.1 5.1 L21.3 15.5 Q17 14 13.5 17.2 Z" fill="#fff"/></svg>
<div class="cell" style="left:315px;top:439px">Un grand cerf</div>
<div class="cell" style="left:519px;top:439px">Jeune</div>
<svg style="left:1247px;top:437px" width="17" height="17" viewBox="0 0 17 17"><path d="M9.4 10.2 L11.9 7.7 L16.4 12.6 L13.9 15.1 Z" fill="#e9d39a" stroke="#c07a3e" stroke-width="0.9"/><circle cx="7" cy="6" r="5.1" fill="#e8f1fb" stroke="#d09552" stroke-width="1.3"/></svg>
<svg style="left:1269px;top:436px" width="17" height="17" viewBox="0 0 17 17"><defs><linearGradient id="cl436" x1="0" y1="0" x2="0" y2="1"><stop offset="0" stop-color="#8ec4f2"/><stop offset="1" stop-color="#2a66b8"/></linearGradient></defs><path d="M0.6 4.4 L3 1.2 Q4 0.3 5 1 L6.2 2.2 L2.4 5.6 Z" fill="#f3b81e" stroke="#e2a412" stroke-width="0.5"/><path d="M15.4 4.4 L13 1.2 Q12 0.3 11 1 L9.8 2.2 L13.6 5.6 Z" fill="#f3b81e" stroke="#e2a412" stroke-width="0.5"/><circle cx="8" cy="9" r="6.9" fill="url(#cl436)"/><circle cx="8" cy="9" r="5.1" fill="#cfe4f8"/><circle cx="8" cy="9" r="4.2" fill="#f6f9fd"/><path d="M8 9 L7.6 5.6 M8 9 L10.6 7.2" stroke="#555" stroke-width="1.1"/><path d="M10.2 8.6 L16.2 12.5 L10.2 16.5 Z" fill="#56ba4a" stroke="#2d8a2a" stroke-width="0.7"/><path d="M1.8 15.6 L3.6 13.6" stroke="#999" stroke-width="1.1"/></svg>
<div class="cell" style="left:28px;top:471px">Bibliothèque Cendrars</div>
<div class="cell" style="left:161px;top:471px">0390001704</div>
<svg style="left:264px;top:465px" width="24" height="24" viewBox="0 0 24 24"><defs><linearGradient id="bg465" x1="0" y1="0" x2="0" y2="1"><stop offset="0" stop-color="#a0a0a0"/><stop offset="0.5" stop-color="#3a3a3a"/><stop offset="0.8" stop-color="#1c1c1c"/><stop offset="1" stop-color="#141414"/></linearGradient></defs><rect x="0.3" y="0.3" width="23.4" height="23.4" rx="4.5" fill="url(#bg465)"/><path d="M4.1 7.4 Q8 5.2 11.2 6.5 L13 17.3 Q9.3 15.6 5.1 19.8 Z" fill="#fff"/><path d="M11.7 6.3 Q15 3.6 18.1 5.1 L21.3 15.5 Q17 14 13.5 17.2 Z" fill="#fff"/></svg>
<div class="cell" style="left:315px;top:471px">Trop petite</div>
<div class="cell" style="left:519px;top:471px">Jeune</div>
<svg style="left:1247px;top:469px" width="17" height="17" viewBox="0 0 17 17"><path d="M9.4 10.2 L11.9 7.7 L16.4 12.6 L13.9 15.1 Z" fill="#e9d39a" stroke="#c07a3e" stroke-width="0.9"/><circle cx="7" cy="6" r="5.1" fill="#e8f1fb" stroke="#d09552" stroke-width="1.3"/></svg>
<svg style="left:1269px;top:468px" width="17" height="17" viewBox="0 0 17 17"><defs><linearGradient id="cl468" x1="0" y1="0" x2="0" y2="1"><stop offset="0" stop-color="#8ec4f2"/><stop offset="1" stop-color="#2a66b8"/></linearGradient></defs><path d="M0.6 4.4 L3 1.2 Q4 0.3 5 1 L6.2 2.2 L2.4 5.6 Z" fill="#f3b81e" stroke="#e2a412" stroke-width="0.5"/><path d="M15.4 4.4 L13 1.2 Q12 0.3 11 1 L9.8 2.2 L13.6 5.6 Z" fill="#f3b81e" stroke="#e2a412" stroke-width="0.5"/><circle cx="8" cy="9" r="6.9" fill="url(#cl468)"/><circle cx="8" cy="9" r="5.1" fill="#cfe4f8"/><circle cx="8" cy="9" r="4.2" fill="#f6f9fd"/><path d="M8 9 L7.6 5.6 M8 9 L10.6 7.2" stroke="#555" stroke-width="1.1"/><path d="M10.2 8.6 L16.2 12.5 L10.2 16.5 Z" fill="#56ba4a" stroke="#2d8a2a" stroke-width="0.7"/><path d="M1.8 15.6 L3.6 13.6" stroke="#999" stroke-width="1.1"/></svg>
<div class="cell" style="left:28px;top:503px">Bibliothèque Cendrars</div>
<div class="cell" style="left:161px;top:503px">1820016439</div>
<svg style="left:264px;top:497px" width="24" height="24" viewBox="0 0 24 24"><defs><linearGradient id="bg497" x1="0" y1="0" x2="0" y2="1"><stop offset="0" stop-color="#a0a0a0"/><stop offset="0.5" stop-color="#3a3a3a"/><stop offset="0.8" stop-color="#1c1c1c"/><stop offset="1" stop-color="#141414"/></linearGradient></defs><rect x="0.3" y="0.3" width="23.4" height="23.4" rx="4.5" fill="url(#bg497)"/><path d="M4.1 7.4 Q8 5.2 11.2 6.5 L13 17.3 Q9.3 15.6 5.1 19.8 Z" fill="#fff"/><path d="M11.7 6.3 Q15 3.6 18.1 5.1 L21.3 15.5 Q17 14 13.5 17.2 Z" fill="#fff"/></svg>
<div class="cell" style="left:315px;top:503px">Ma famille</div>
<div class="cell" style="left:519px;top:503px">Jeune</div>
<svg style="left:1247px;top:501px" width="17" height="17" viewBox="0 0 17 17"><path d="M9.4 10.2 L11.9 7.7 L16.4 12.6 L13.9 15.1 Z" fill="#e9d39a" stroke="#c07a3e" stroke-width="0.9"/><circle cx="7" cy="6" r="5.1" fill="#e8f1fb" stroke="#d09552" stroke-width="1.3"/></svg>
<svg style="left:1269px;top:500px" width="17" height="17" viewBox="0 0 17 17"><defs><linearGradient id="cl500" x1="0" y1="0" x2="0" y2="1"><stop offset="0" stop-color="#8ec4f2"/><stop offset="1" stop-color="#2a66b8"/></linearGradient></defs><path d="M0.6 4.4 L3 1.2 Q4 0.3 5 1 L6.2 2.2 L2.4 5.6 Z" fill="#f3b81e" stroke="#e2a412" stroke-width="0.5"/><path d="M15.4 4.4 L13 1.2 Q12 0.3 11 1 L9.8 2.2 L13.6 5.6 Z" fill="#f3b81e" stroke="#e2a412" stroke-width="0.5"/><circle cx="8" cy="9" r="6.9" fill="url(#cl500)"/><circle cx="8" cy="9" r="5.1" fill="#cfe4f8"/><circle cx="8" cy="9" r="4.2" fill="#f6f9fd"/><path d="M8 9 L7.6 5.6 M8 9 L10.6 7.2" stroke="#555" stroke-width="1.1"/><path d="M10.2 8.6 L16.2 12.5 L10.2 16.5 Z" fill="#56ba4a" stroke="#2d8a2a" stroke-width="0.7"/><path d="M1.8 15.6 L3.6 13.6" stroke="#999" stroke-width="1.1"/></svg>
<div class="cell" style="left:28px;top:535px">Bibliothèque Cendrars</div>
<div class="cell" style="left:161px;top:535px">2037791534</div>
<svg style="left:264px;top:529px" width="24" height="24" viewBox="0 0 24 24"><defs><linearGradient id="bg529" x1="0" y1="0" x2="0" y2="1"><stop offset="0" stop-color="#a0a0a0"/><stop offset="0.5" stop-color="#3a3a3a"/><stop offset="0.8" stop-color="#1c1c1c"/><stop offset="1" stop-color="#141414"/></linearGradient></defs><rect x="0.3" y="0.3" width="23.4" height="23.4" rx="4.5" fill="url(#bg529)"/><path d="M4.1 7.4 Q8 5.2 11.2 6.5 L13 17.3 Q9.3 15.6 5.1 19.8 Z" fill="#fff"/><path d="M11.7 6.3 Q15 3.6 18.1 5.1 L21.3 15.5 Q17 14 13.5 17.2 Z" fill="#fff"/></svg>
<div class="cell" style="left:315px;top:535px">Le Viking qui voulait épouser la fille d...</div>
<div class="cell" style="left:519px;top:535px">Tout public</div>
<svg style="left:1247px;top:533px" width="17" height="17" viewBox="0 0 17 17"><path d="M9.4 10.2 L11.9 7.7 L16.4 12.6 L13.9 15.1 Z" fill="#e9d39a" stroke="#c07a3e" stroke-width="0.9"/><circle cx="7" cy="6" r="5.1" fill="#e8f1fb" stroke="#d09552" stroke-width="1.3"/></svg>
<svg style="left:1269px;top:532px" width="17" height="17" viewBox="0 0 17 17"><defs><linearGradient id="cl532" x1="0" y1="0" x2="0" y2="1"><stop offset="0" stop-color="#8ec4f2"/><stop offset="1" stop-color="#2a66b8"/></linearGradient></defs><path d="M0.6 4.4 L3 1.2 Q4 0.3 5 1 L6.2 2.2 L2.4 5.6 Z" fill="#f3b81e" stroke="#e2a412" stroke-width="0.5"/><path d="M15.4 4.4 L13 1.2 Q12 0.3 11 1 L9.8 2.2 L13.6 5.6 Z" fill="#f3b81e" stroke="#e2a412" stroke-width="0.5"/><circle cx="8" cy="9" r="6.9" fill="url(#cl532)"/><circle cx="8" cy="9" r="5.1" fill="#cfe4f8"/><circle cx="8" cy="9" r="4.2" fill="#f6f9fd"/><path d="M8 9 L7.6 5.6 M8 9 L10.6 7.2" stroke="#555" stroke-width="1.1"/><path d="M10.2 8.6 L16.2 12.5 L10.2 16.5 Z" fill="#56ba4a" stroke="#2d8a2a" stroke-width="0.7"/><path d="M1.8 15.6 L3.6 13.6" stroke="#999" stroke-width="1.1"/></svg>
<div class="cell" style="left:28px;top:567px">Bibliothèque Cendrars</div>
<div class="cell" style="left:161px;top:567px">4648550088</div>
<svg style="left:264px;top:561px" width="24" height="24" viewBox="0 0 24 24"><defs><linearGradient id="bg561" x1="0" y1="0" x2="0" y2="1"><stop offset="0" stop-color="#a0a0a0"/><stop offset="0.5" stop-color="#3a3a3a"/><stop offset="0.8" stop-color="#1c1c1c"/><stop offset="1" stop-color="#141414"/></linearGradient></defs><rect x="0.3" y="0.3" width="23.4" height="23.4" rx="4.5" fill="url(#bg561)"/><path d="M4.1 7.4 Q8 5.2 11.2 6.5 L13 17.3 Q9.3 15.6 5.1 19.8 Z" fill="#fff"/><path d="M11.7 6.3 Q15 3.6 18.1 5.1 L21.3 15.5 Q17 14 13.5 17.2 Z" fill="#fff"/></svg>
<div class="cell" style="left:315px;top:567px">Le Mot chien n'aboie pas</div>
<div class="cell" style="left:519px;top:567px">Jeune</div>
<svg style="left:1247px;top:565px" width="17" height="17" viewBox="0 0 17 17"><path d="M9.4 10.2 L11.9 7.7 L16.4 12.6 L13.9 15.1 Z" fill="#e9d39a" stroke="#c07a3e" stroke-width="0.9"/><circle cx="7" cy="6" r="5.1" fill="#e8f1fb" stroke="#d09552" stroke-width="1.3"/></svg>
<svg style="left:1269px;top:564px" width="17" height="17" viewBox="0 0 17 17"><defs><linearGradient id="cl564" x1="0" y1="0" x2="0" y2="1"><stop offset="0" stop-color="#8ec4f2"/><stop offset="1" stop-color="#2a66b8"/></linearGradient></defs><path d="M0.6 4.4 L3 1.2 Q4 0.3 5 1 L6.2 2.2 L2.4 5.6 Z" fill="#f3b81e" stroke="#e2a412" stroke-width="0.5"/><path d="M15.4 4.4 L13 1.2 Q12 0.3 11 1 L9.8 2.2 L13.6 5.6 Z" fill="#f3b81e" stroke="#e2a412" stroke-width="0.5"/><circle cx="8" cy="9" r="6.9" fill="url(#cl564)"/><circle cx="8" cy="9" r="5.1" fill="#cfe4f8"/><circle cx="8" cy="9" r="4.2" fill="#f6f9fd"/><path d="M8 9 L7.6 5.6 M8 9 L10.6 7.2" stroke="#555" stroke-width="1.1"/><path d="M10.2 8.6 L16.2 12.5 L10.2 16.5 Z" fill="#56ba4a" stroke="#2d8a2a" stroke-width="0.7"/><path d="M1.8 15.6 L3.6 13.6" stroke="#999" stroke-width="1.1"/></svg>
<div class="cell" style="left:28px;top:599px">Bibliothèque Cendrars</div>
<div class="cell" style="left:161px;top:599px">2147470088</div>
<svg style="left:264px;top:593px" width="24" height="24" viewBox="0 0 24 24"><defs><linearGradient id="bg593" x1="0" y1="0" x2="0" y2="1"><stop offset="0" stop-color="#a0a0a0"/><stop offset="0.5" stop-color="#3a3a3a"/><stop offset="0.8" stop-color="#1c1c1c"/><stop offset="1" stop-color="#141414"/></linearGradient></defs><rect x="0.3" y="0.3" width="23.4" height="23.4" rx="4.5" fill="url(#bg593)"/><path d="M4.1 7.4 Q8 5.2 11.2 6.5 L13 17.3 Q9.3 15.6 5.1 19.8 Z" fill="#fff"/><path d="M11.7 6.3 Q15 3.6 18.1 5.1 L21.3 15.5 Q17 14 13.5 17.2 Z" fill="#fff"/></svg>
<div class="cell" style="left:315px;top:599px">Le Secret de la tour</div>
<div class="cell" style="left:519px;top:599px">Jeune</div>
<svg style="left:1247px;top:597px" width="17" height="17" viewBox="0 0 17 17"><path d="M9.4 10.2 L11.9 7.7 L16.4 12.6 L13.9 15.1 Z" fill="#e9d39a" stroke="#c07a3e" stroke-width="0.9"/><circle cx="7" cy="6" r="5.1" fill="#e8f1fb" stroke="#d09552" stroke-width="1.3"/></svg>
<svg style="left:1269px;top:596px" width="17" height="17" viewBox="0 0 17 17"><defs><linearGradient id="cl596" x1="0" y1="0" x2="0" y2="1"><stop offset="0" stop-color="#8ec4f2"/><stop offset="1" stop-color="#2a66b8"/></linearGradient></defs><path d="M0.6 4.4 L3 1.2 Q4 0.3 5 1 L6.2 2.2 L2.4 5.6 Z" fill="#f3b81e" stroke="#e2a412" stroke-width="0.5"/><path d="M15.4 4.4 L13 1.2 Q12 0.3 11 1 L9.8 2.2 L13.6 5.6 Z" fill="#f3b81e" stroke="#e2a412" stroke-width="0.5"/><circle cx="8" cy="9" r="6.9" fill="url(#cl596)"/><circle cx="8" cy="9" r="5.1" fill="#cfe4f8"/><circle cx="8" cy="9" r="4.2" fill="#f6f9fd"/><path d="M8 9 L7.6 5.6 M8 9 L10.6 7.2" stroke="#555" stroke-width="1.1"/><path d="M10.2 8.6 L16.2 12.5 L10.2 16.5 Z" fill="#56ba4a" stroke="#2d8a2a" stroke-width="0.7"/><path d="M1.8 15.6 L3.6 13.6" stroke="#999" stroke-width="1.1"/></svg>
<div class="cell" style="left:28px;top:631px">Bibliothèque Cendrars</div>
<div class="cell" style="left:161px;top:631px">0300300930</div>
<svg style="left:264px;top:625px" width="24" height="24" viewBox="0 0 24 24"><defs><linearGradient id="bg625" x1="0" y1="0" x2="0" y2="1"><stop offset="0" stop-color="#a0a0a0"/><stop offset="0.5" stop-color="#3a3a3a"/><stop offset="0.8" stop-color="#1c1c1c"/><stop offset="1" stop-color="#141414"/></linearGradient></defs><rect x="0.3" y="0.3" width="23.4" height="23.4" rx="4.5" fill="url(#bg625)"/><path d="M4.1 7.4 Q8 5.2 11.2 6.5 L13 17.3 Q9.3 15.6 5.1 19.8 Z" fill="#fff"/><path d="M11.7 6.3 Q15 3.6 18.1 5.1 L21.3 15.5 Q17 14 13.5 17.2 Z" fill="#fff"/></svg>
<div class="cell" style="left:315px;top:631px">Charly 9</div>
<div class="cell" style="left:519px;top:631px">Adolescent</div>
<svg style="left:1247px;top:629px" width="17" height="17" viewBox="0 0 17 17"><path d="M9.4 10.2 L11.9 7.7 L16.4 12.6 L13.9 15.1 Z" fill="#e9d39a" stroke="#c07a3e" stroke-width="0.9"/><circle cx="7" cy="6" r="5.1" fill="#e8f1fb" stroke="#d09552" stroke-width="1.3"/></svg>
<svg style="left:1269px;top:628px" width="17" height="17" viewBox="0 0 17 17"><defs><linearGradient id="cl628" x1="0" y1="0" x2="0" y2="1"><stop offset="0" stop-color="#8ec4f2"/><stop offset="1" stop-color="#2a66b8"/></linearGradient></defs><path d="M0.6 4.4 L3 1.2 Q4 0.3 5 1 L6.2 2.2 L2.4 5.6 Z" fill="#f3b81e" stroke="#e2a412" stroke-width="0.5"/><path d="M15.4 4.4 L13 1.2 Q12 0.3 11 1 L9.8 2.2 L13.6 5.6 Z" fill="#f3b81e" stroke="#e2a412" stroke-width="0.5"/><circle cx="8" cy="9" r="6.9" fill="url(#cl628)"/><circle cx="8" cy="9" r="5.1" fill="#cfe4f8"/><circle cx="8" cy="9" r="4.2" fill="#f6f9fd"/><path d="M8 9 L7.6 5.6 M8 9 L10.6 7.2" stroke="#555" stroke-width="1.1"/><path d="M10.2 8.6 L16.2 12.5 L10.2 16.5 Z" fill="#56ba4a" stroke="#2d8a2a" stroke-width="0.7"/><path d="M1.8 15.6 L3.6 13.6" stroke="#999" stroke-width="1.1"/></svg>
<div class="cell" style="left:28px;top:663px">Bibliothèque Cendrars</div>
<div class="cell" style="left:161px;top:663px">2430003364</div>
<svg style="left:264px;top:657px" width="24" height="24" viewBox="0 0 24 24"><defs><linearGradient id="bg657" x1="0" y1="0" x2="0" y2="1"><stop offset="0" stop-color="#a0a0a0"/><stop offset="0.5" stop-color="#3a3a3a"/><stop offset="0.8" stop-color="#1c1c1c"/><stop offset="1" stop-color="#141414"/></linearGradient></defs><rect x="0.3" y="0.3" width="23.4" height="23.4" rx="4.5" fill="url(#bg657)"/><path d="M4.1 7.4 Q8 5.2 11.2 6.5 L13 17.3 Q9.3 15.6 5.1 19.8 Z" fill="#fff"/><path d="M11.7 6.3 Q15 3.6 18.1 5.1 L21.3 15.5 Q17 14 13.5 17.2 Z" fill="#fff"/></svg>
<div class="cell" style="left:315px;top:663px">Au lit !</div>
<div class="cell" style="left:519px;top:663px">Jeune</div>
<svg style="left:1247px;top:661px" width="17" height="17" viewBox="0 0 17 17"><path d="M9.4 10.2 L11.9 7.7 L16.4 12.6 L13.9 15.1 Z" fill="#e9d39a" stroke="#c07a3e" stroke-width="0.9"/><circle cx="7" cy="6" r="5.1" fill="#e8f1fb" stroke="#d09552" stroke-width="1.3"/></svg>
<svg style="left:1269px;top:660px" width="17" height="17" viewBox="0 0 17 17"><defs><linearGradient id="cl660" x1="0" y1="0" x2="0" y2="1"><stop offset="0" stop-color="#8ec4f2"/><stop offset="1" stop-color="#2a66b8"/></linearGradient></defs><path d="M0.6 4.4 L3 1.2 Q4 0.3 5 1 L6.2 2.2 L2.4 5.6 Z" fill="#f3b81e" stroke="#e2a412" stroke-width="0.5"/><path d="M15.4 4.4 L13 1.2 Q12 0.3 11 1 L9.8 2.2 L13.6 5.6 Z" fill="#f3b81e" stroke="#e2a412" stroke-width="0.5"/><circle cx="8" cy="9" r="6.9" fill="url(#cl660)"/><circle cx="8" cy="9" r="5.1" fill="#cfe4f8"/><circle cx="8" cy="9" r="4.2" fill="#f6f9fd"/><path d="M8 9 L7.6 5.6 M8 9 L10.6 7.2" stroke="#555" stroke-width="1.1"/><path d="M10.2 8.6 L16.2 12.5 L10.2 16.5 Z" fill="#56ba4a" stroke="#2d8a2a" stroke-width="0.7"/><path d="M1.8 15.6 L3.6 13.6" stroke="#999" stroke-width="1.1"/></svg>
<div class="cell" style="left:28px;top:695px">Bibliothèque Cendrars</div>
<div class="cell" style="left:161px;top:695px">516748</div>
<svg style="left:264px;top:689px" width="24" height="24" viewBox="0 0 24 24"><defs><linearGradient id="cg689" x1="0" y1="0" x2="0" y2="1"><stop offset="0" stop-color="#9a9a9a"/><stop offset="0.45" stop-color="#3a3a3a"/><stop offset="1" stop-color="#111"/></linearGradient></defs><rect x="0.5" y="0.5" width="23" height="23" rx="4.5" fill="url(#cg689)"/><circle cx="11.5" cy="13" r="7" fill="#fff"/><circle cx="11.5" cy="13" r="2.6" fill="#333"/><circle cx="11.5" cy="13" r="1" fill="#fff"/><path d="M15 9 L15 4 L18 5.5" stroke="#333" stroke-width="1.4" fill="none"/></svg>
<div class="cell" style="left:315px;top:695px">Casse-Noisette</div>
<div class="cell" style="left:519px;top:695px">Tout public</div>
<svg style="left:1247px;top:693px" width="17" height="17" viewBox="0 0 17 17"><path d="M9.4 10.2 L11.9 7.7 L16.4 12.6 L13.9 15.1 Z" fill="#e9d39a" stroke="#c07a3e" stroke-width="0.9"/><circle cx="7" cy="6" r="5.1" fill="#e8f1fb" stroke="#d09552" stroke-width="1.3"/></svg>
<svg style="left:1269px;top:692px" width="17" height="17" viewBox="0 0 17 17"><defs><linearGradient id="cl692" x1="0" y1="0" x2="0" y2="1"><stop offset="0" stop-color="#8ec4f2"/><stop offset="1" stop-color="#2a66b8"/></linearGradient></defs><path d="M0.6 4.4 L3 1.2 Q4 0.3 5 1 L6.2 2.2 L2.4 5.6 Z" fill="#f3b81e" stroke="#e2a412" stroke-width="0.5"/><path d="M15.4 4.4 L13 1.2 Q12 0.3 11 1 L9.8 2.2 L13.6 5.6 Z" fill="#f3b81e" stroke="#e2a412" stroke-width="0.5"/><circle cx="8" cy="9" r="6.9" fill="url(#cl692)"/><circle cx="8" cy="9" r="5.1" fill="#cfe4f8"/><circle cx="8" cy="9" r="4.2" fill="#f6f9fd"/><path d="M8 9 L7.6 5.6 M8 9 L10.6 7.2" stroke="#555" stroke-width="1.1"/><path d="M10.2 8.6 L16.2 12.5 L10.2 16.5 Z" fill="#56ba4a" stroke="#2d8a2a" stroke-width="0.7"/><path d="M1.8 15.6 L3.6 13.6" stroke="#999" stroke-width="1.1"/></svg>
<div class="cell" style="left:28px;top:727px">Bibliothèque Cendrars</div>
<div class="cell" style="left:161px;top:727px">3430180088</div>
<svg style="left:264px;top:721px" width="24" height="24" viewBox="0 0 24 24"><defs><linearGradient id="bg721" x1="0" y1="0" x2="0" y2="1"><stop offset="0" stop-color="#a0a0a0"/><stop offset="0.5" stop-color="#3a3a3a"/><stop offset="0.8" stop-color="#1c1c1c"/><stop offset="1" stop-color="#141414"/></linearGradient></defs><rect x="0.3" y="0.3" width="23.4" height="23.4" rx="4.5" fill="url(#bg721)"/><path d="M4.1 7.4 Q8 5.2 11.2 6.5 L13 17.3 Q9.3 15.6 5.1 19.8 Z" fill="#fff"/><path d="M11.7 6.3 Q15 3.6 18.1 5.1 L21.3 15.5 Q17 14 13.5 17.2 Z" fill="#fff"/></svg>
<div class="cell" style="left:315px;top:727px">Coquelicot maison</div>
<div class="cell" style="left:519px;top:727px">Jeune</div>
<svg style="left:1247px;top:725px" width="17" height="17" viewBox="0 0 17 17"><path d="M9.4 10.2 L11.9 7.7 L16.4 12.6 L13.9 15.1 Z" fill="#e9d39a" stroke="#c07a3e" stroke-width="0.9"/><circle cx="7" cy="6" r="5.1" fill="#e8f1fb" stroke="#d09552" stroke-width="1.3"/></svg>
<svg style="left:1269px;top:724px" width="17" height="17" viewBox="0 0 17 17"><defs><linearGradient id="cl724" x1="0" y1="0" x2="0" y2="1"><stop offset="0" stop-color="#8ec4f2"/><stop offset="1" stop-color="#2a66b8"/></linearGradient></defs><path d="M0.6 4.4 L3 1.2 Q4 0.3 5 1 L6.2 2.2 L2.4 5.6 Z" fill="#f3b81e" stroke="#e2a412" stroke-width="0.5"/><path d="M15.4 4.4 L13 1.2 Q12 0.3 11 1 L9.8 2.2 L13.6 5.6 Z" fill="#f3b81e" stroke="#e2a412" stroke-width="0.5"/><circle cx="8" cy="9" r="6.9" fill="url(#cl724)"/><circle cx="8" cy="9" r="5.1" fill="#cfe4f8"/><circle cx="8" cy="9" r="4.2" fill="#f6f9fd"/><path d="M8 9 L7.6 5.6 M8 9 L10.6 7.2" stroke="#555" stroke-width="1.1"/><path d="M10.2 8.6 L16.2 12.5 L10.2 16.5 Z" fill="#56ba4a" stroke="#2d8a2a" stroke-width="0.7"/><path d="M1.8 15.6 L3.6 13.6" stroke="#999" stroke-width="1.1"/></svg>
<div class="cell" style="left:28px;top:759px">Bibliothèque Cendrars</div>
<div class="cell" style="left:161px;top:759px">2055291534</div>
<svg style="left:264px;top:753px" width="24" height="24" viewBox="0 0 24 24"><defs><linearGradient id="bg753" x1="0" y1="0" x2="0" y2="1"><stop offset="0" stop-color="#a0a0a0"/><stop offset="0.5" stop-color="#3a3a3a"/><stop offset="0.8" stop-color="#1c1c1c"/><stop offset="1" stop-color="#141414"/></linearGradient></defs><rect x="0.3" y="0.3" width="23.4" height="23.4" rx="4.5" fill="url(#bg753)"/><path d="M4.1 7.4 Q8 5.2 11.2 6.5 L13 17.3 Q9.3 15.6 5.1 19.8 Z" fill="#fff"/><path d="M11.7 6.3 Q15 3.6 18.1 5.1 L21.3 15.5 Q17 14 13.5 17.2 Z" fill="#fff"/></svg>
<div class="cell" style="left:315px;top:759px">Bretagne</div>
<div class="cell" style="left:519px;top:759px">Tout public</div>
<div class="cell" style="left:621px;top:759px">914.41 BRE</div>
<div class="cell" style="left:723px;top:759px">07/05/2020</div>
<div class="cell" style="left:825px;top:759px">19/05/2020</div>
<div class="cell" style="left:927px;top:759px">0</div>
<div class="cell" style="left:1029px;top:759px">Non</div>
<svg style="left:1247px;top:757px" width="17" height="17" viewBox="0 0 17 17"><path d="M9.4 10.2 L11.9 7.7 L16.4 12.6 L13.9 15.1 Z" fill="#e9d39a" stroke="#c07a3e" stroke-width="0.9"/><circle cx="7" cy="6" r="5.1" fill="#e8f1fb" stroke="#d09552" stroke-width="1.3"/></svg>
<svg style="left:1269px;top:756px" width="17" height="17" viewBox="0 0 17 17"><defs><linearGradient id="cl756" x1="0" y1="0" x2="0" y2="1"><stop offset="0" stop-color="#8ec4f2"/><stop offset="1" stop-color="#2a66b8"/></linearGradient></defs><path d="M0.6 4.4 L3 1.2 Q4 0.3 5 1 L6.2 2.2 L2.4 5.6 Z" fill="#f3b81e" stroke="#e2a412" stroke-width="0.5"/><path d="M15.4 4.4 L13 1.2 Q12 0.3 11 1 L9.8 2.2 L13.6 5.6 Z" fill="#f3b81e" stroke="#e2a412" stroke-width="0.5"/><circle cx="8" cy="9" r="6.9" fill="url(#cl756)"/><circle cx="8" cy="9" r="5.1" fill="#cfe4f8"/><circle cx="8" cy="9" r="4.2" fill="#f6f9fd"/><path d="M8 9 L7.6 5.6 M8 9 L10.6 7.2" stroke="#555" stroke-width="1.1"/><path d="M10.2 8.6 L16.2 12.5 L10.2 16.5 Z" fill="#56ba4a" stroke="#2d8a2a" stroke-width="0.7"/><path d="M1.8 15.6 L3.6 13.6" stroke="#999" stroke-width="1.1"/></svg>
<div class="cell" style="left:28px;top:791px">Bibliothèque Cendrars</div>
<div class="cell" style="left:161px;top:791px">2046091534</div>
<svg style="left:264px;top:785px" width="24" height="24" viewBox="0 0 24 24"><defs><linearGradient id="bg785" x1="0" y1="0" x2="0" y2="1"><stop offset="0" stop-color="#a0a0a0"/><stop offset="0.5" stop-color="#3a3a3a"/><stop offset="0.8" stop-color="#1c1c1c"/><stop offset="1" stop-color="#141414"/></linearGradient></defs><rect x="0.3" y="0.3" width="23.4" height="23.4" rx="4.5" fill="url(#bg785)"/><path d="M4.1 7.4 Q8 5.2 11.2 6.5 L13 17.3 Q9.3 15.6 5.1 19.8 Z" fill="#fff"/><path d="M11.7 6.3 Q15 3.6 18.1 5.1 L21.3 15.5 Q17 14 13.5 17.2 Z" fill="#fff"/></svg>
<div class="cell" style="left:315px;top:791px">L'emprise</div>
<div class="cell" style="left:519px;top:791px">Tout public</div>
<div class="cell" style="left:621px;top:791px">R DUG</div>
<div class="cell" style="left:723px;top:791px">07/05/2020</div>
<div class="cell" style="left:825px;top:791px">19/05/2020</div>
<div class="cell" style="left:927px;top:791px">0</div>
<div class="cell" style="left:1029px;top:791px">Non</div>
<svg style="left:1247px;top:789px" width="17" height="17" viewBox="0 0 17 17"><path d="M9.4 10.2 L11.9 7.7 L16.4 12.6 L13.9 15.1 Z" fill="#e9d39a" stroke="#c07a3e" stroke-width="0.9"/><circle cx="7" cy="6" r="5.1" fill="#e8f1fb" stroke="#d09552" stroke-width="1.3"/></svg>
<svg style="left:1269px;top:788px" width="17" height="17" viewBox="0 0 17 17"><defs><linearGradient id="cl788" x1="0" y1="0" x2="0" y2="1"><stop offset="0" stop-color="#8ec4f2"/><stop offset="1" stop-color="#2a66b8"/></linearGradient></defs><path d="M0.6 4.4 L3 1.2 Q4 0.3 5 1 L6.2 2.2 L2.4 5.6 Z" fill="#f3b81e" stroke="#e2a412" stroke-width="0.5"/><path d="M15.4 4.4 L13 1.2 Q12 0.3 11 1 L9.8 2.2 L13.6 5.6 Z" fill="#f3b81e" stroke="#e2a412" stroke-width="0.5"/><circle cx="8" cy="9" r="6.9" fill="url(#cl788)"/><circle cx="8" cy="9" r="5.1" fill="#cfe4f8"/><circle cx="8" cy="9" r="4.2" fill="#f6f9fd"/><path d="M8 9 L7.6 5.6 M8 9 L10.6 7.2" stroke="#555" stroke-width="1.1"/><path d="M10.2 8.6 L16.2 12.5 L10.2 16.5 Z" fill="#56ba4a" stroke="#2d8a2a" stroke-width="0.7"/><path d="M1.8 15.6 L3.6 13.6" stroke="#999" stroke-width="1.1"/></svg>
<div class="cell" style="left:28px;top:823px">Bibliothèque Cendrars</div>
<div class="cell" style="left:161px;top:823px">3743140088</div>
<svg style="left:264px;top:817px" width="24" height="24" viewBox="0 0 24 24"><defs><linearGradient id="bg817" x1="0" y1="0" x2="0" y2="1"><stop offset="0" stop-color="#a0a0a0"/><stop offset="0.5" stop-color="#3a3a3a"/><stop offset="0.8" stop-color="#1c1c1c"/><stop offset="1" stop-color="#141414"/></linearGradient></defs><rect x="0.3" y="0.3" width="23.4" height="23.4" rx="4.5" fill="url(#bg817)"/><path d="M4.1 7.4 Q8 5.2 11.2 6.5 L13 17.3 Q9.3 15.6 5.1 19.8 Z" fill="#fff"/><path d="M11.7 6.3 Q15 3.6 18.1 5.1 L21.3 15.5 Q17 14 13.5 17.2 Z" fill="#fff"/></svg>
<div class="cell" style="left:315px;top:823px">Une poule sur un mur...</div>
<div class="cell" style="left:519px;top:823px">Jeune</div>
<div class="cell" style="left:621px;top:823px">A DEV P</div>
<div class="cell" style="left:723px;top:823px">07/05/2020</div>
<div class="cell" style="left:825px;top:823px">19/05/2020</div>
<div class="cell" style="left:927px;top:823px">0</div>
<div class="cell" style="left:1029px;top:823px">Non</div>
<svg style="left:1247px;top:821px" width="17" height="17" viewBox="0 0 17 17"><path d="M9.4 10.2 L11.9 7.7 L16.4 12.6 L13.9 15.1 Z" fill="#e9d39a" stroke="#c07a3e" stroke-width="0.9"/><circle cx="7" cy="6" r="5.1" fill="#e8f1fb" stroke="#d09552" stroke-width="1.3"/></svg>
<svg style="left:1269px;top:820px" width="17" height="17" viewBox="0 0 17 17"><defs><linearGradient id="cl820" x1="0" y1="0" x2="0" y2="1"><stop offset="0" stop-color="#8ec4f2"/><stop offset="1" stop-color="#2a66b8"/></linearGradient></defs><path d="M0.6 4.4 L3 1.2 Q4 0.3 5 1 L6.2 2.2 L2.4 5.6 Z" fill="#f3b81e" stroke="#e2a412" stroke-width="0.5"/><path d="M15.4 4.4 L13 1.2 Q12 0.3 11 1 L9.8 2.2 L13.6 5.6 Z" fill="#f3b81e" stroke="#e2a412" stroke-width="0.5"/><circle cx="8" cy="9" r="6.9" fill="url(#cl820)"/><circle cx="8" cy="9" r="5.1" fill="#cfe4f8"/><circle cx="8" cy="9" r="4.2" fill="#f6f9fd"/><path d="M8 9 L7.6 5.6 M8 9 L10.6 7.2" stroke="#555" stroke-width="1.1"/><path d="M10.2 8.6 L16.2 12.5 L10.2 16.5 Z" fill="#56ba4a" stroke="#2d8a2a" stroke-width="0.7"/><path d="M1.8 15.6 L3.6 13.6" stroke="#999" stroke-width="1.1"/></svg>
<svg style="left:29px;top:850px" width="12" height="12" viewBox="0 0 12 12"><rect x="0.5" y="0.5" width="1.6" height="11" fill="#b8c0cc"/><path d="M11 0.5 L3 6 L11 11.5 Z" fill="#c5ccd6"/></svg>
<svg style="left:52px;top:850px" width="9" height="12" viewBox="0 0 9 12"><path d="M8 0.5 L1 6 L8 11.5 Z" fill="#c5ccd6"/></svg>
<div class="a" style="left:71px;top:849px;width:1px;height:15px;background:#9fbde6"></div>
<div class="a" style="left:78px;top:852px;font-size:11px;color:#222">Page</div>
<div class="a" style="left:106px;top:846px;width:30px;height:20px;border:1px solid #b5b8c8;background:#fff"></div>
<div class="a" style="left:126px;top:852px;font-size:11px;color:#222">1</div>
<div class="a" style="left:138px;top:852px;font-size:11px;color:#222">sur 3</div>
<div class="a" style="left:169px;top:849px;width:1px;height:15px;background:#9fbde6"></div>
<svg style="left:181px;top:850px" width="8" height="12" viewBox="0 0 8 12"><path d="M0.5 0.5 L7.5 6 L0.5 11.5 Z" fill="#2f6fc8"/></svg>
<svg style="left:201px;top:850px" width="12" height="12" viewBox="0 0 12 12"><path d="M0.5 0.5 L8 6 L0.5 11.5 Z" fill="#2f6fc8"/><rect x="9" y="0.5" width="2" height="11" fill="#2f6fc8"/></svg>
<div class="a" style="left:220px;top:849px;width:1px;height:15px;background:#9fbde6"></div>
<svg style="left:229px;top:849px" width="15" height="15" viewBox="0 0 15 15"><path d="M2 7 A5.5 5.5 0 0 1 12 4.5" stroke="#3a84d8" stroke-width="2" fill="none"/><path d="M10 2 L14 3 L12 7 Z" fill="#3a84d8"/><path d="M13 8 A5.5 5.5 0 0 1 3 10.5" stroke="#3a84d8" stroke-width="2" fill="none"/><path d="M5 13 L1 12 L3 8 Z" fill="#3a84d8"/></svg>
<div class="a" style="left:1470px;top:852px;font-size:11px;color:#111;letter-spacing:-0.05px">Page courante 1 - 500 sur 1411</div>
<div class="a" style="left:1405px;top:306px;width:224px;height:158px;background:#f0f0f0;border:1px solid #718bb7;box-shadow:0 2px 5px rgba(0,0,0,0.18)"></div>
<div class="a" style="left:1430px;top:307px;width:2px;height:98px;background:#e0e0e0;border-right:1px solid #fff"></div>
<div class="a" style="left:1430px;top:411px;width:2px;height:52px;background:#e0e0e0;border-right:1px solid #fff"></div>
<div class="a" style="left:1408px;top:359px;width:218px;height:22px;border:1px solid #aaccf6;background:linear-gradient(#ebf3fd,#d9e8fb);border-radius:2px"></div>
<div class="a" style="left:1412px;top:408px;width:210px;height:2px;background:#e0e0e0;border-bottom:1px solid #fff"></div>
<div class="mi" style="top:316px">Exporter les prêts</div>
<div class="mi" style="top:340px">Prolonger les prêts</div>
<div class="mi" style="top:364px">Restituer les prêts</div>
<div class="mi" style="top:388px">Supprimer les exemplaires en prêt</div>
<div class="mi" style="top:420px">Prêt inter bibliothèques</div>
<div class="mi" style="top:444px">Retour inter bibliothèques</div>
<svg style="left:1411px;top:313px" width="16" height="16" viewBox="0 0 16 16"><path d="M4 0.5 H12 L15.5 4 V15.5 H4 Z" fill="#fff" stroke="#aaa" stroke-width="0.8"/><rect x="0.5" y="3" width="10" height="10" fill="#2f8a3a"/><rect x="2" y="4.5" width="7" height="7" fill="#dff0df"/><path d="M3 5.5 L8 10.5 M8 5.5 L3 10.5" stroke="#2f8a3a" stroke-width="1.3"/></svg>
<svg style="left:1411px;top:337px" width="17" height="17" viewBox="0 0 17 17"><defs><linearGradient id="clm" x1="0" y1="0" x2="0" y2="1"><stop offset="0" stop-color="#8ec4f2"/><stop offset="1" stop-color="#2a66b8"/></linearGradient></defs><path d="M0.6 4.4 L3 1.2 Q4 0.3 5 1 L6.2 2.2 L2.4 5.6 Z" fill="#f3b81e" stroke="#e2a412" stroke-width="0.5"/><path d="M15.4 4.4 L13 1.2 Q12 0.3 11 1 L9.8 2.2 L13.6 5.6 Z" fill="#f3b81e" stroke="#e2a412" stroke-width="0.5"/><circle cx="8" cy="9" r="6.9" fill="url(#clm)"/><circle cx="8" cy="9" r="5.1" fill="#cfe4f8"/><circle cx="8" cy="9" r="4.2" fill="#f6f9fd"/><path d="M8 9 L7.6 5.6 M8 9 L10.6 7.2" stroke="#555" stroke-width="1.1"/><path d="M10.2 8.6 L16.2 12.5 L10.2 16.5 Z" fill="#56ba4a" stroke="#2d8a2a" stroke-width="0.7"/><path d="M1.8 15.6 L3.6 13.6" stroke="#999" stroke-width="1.1"/></svg>
<svg style="left:1413px;top:362px" width="14" height="16" viewBox="0 0 14 16"><path d="M8 15.5 V9 Q8 6.3 5.5 6.3 H5 V9.5 L0.5 5 L5 0.7 V3.4 H6 Q11.5 3.4 11.5 9 V15.5 Z" fill="#66bb50" stroke="#2b7a22" stroke-width="0.8"/></svg>
<svg style="left:1412px;top:385px" width="16" height="16" viewBox="0 0 16 16"><defs><radialGradient id="rg" cx="0.45" cy="0.35" r="0.7"><stop offset="0" stop-color="#f59a9a"/><stop offset="1" stop-color="#d23a3a"/></radialGradient></defs><circle cx="8" cy="8" r="6.8" fill="url(#rg)" stroke="#b83030" stroke-width="0.8"/><rect x="3.8" y="6.8" width="8.4" height="2.6" rx="0.6" fill="#fff"/></svg>
<svg style="left:1411px;top:417px" width="17" height="17" viewBox="0 0 17 17"><path d="M0.5 15.5 Q8 13.8 16 15.5 L16 16.5 L0.5 16.5Z" fill="#5cae48"/><path d="M3.5 8 V15 H13.5 V8" fill="#fafafa" stroke="#9a8a70" stroke-width="0.7"/><path d="M1 8.5 L8.5 1.5 L16 8.5" fill="none" stroke="#b57a3c" stroke-width="2.2" stroke-linejoin="round"/><path d="M7 10.5 H11 V8 L15.5 11.8 L11 15.5 V13 H7 Z" fill="#6cc050" stroke="#2d8a2a" stroke-width="0.7"/></svg>
<svg style="left:1411px;top:441px" width="17" height="17" viewBox="0 0 17 17"><path d="M0.5 15.5 Q8 13.8 16 15.5 L16 16.5 L0.5 16.5Z" fill="#5cae48"/><path d="M3.5 8 V15 H13.5 V8" fill="#fafafa" stroke="#9a8a70" stroke-width="0.7"/><path d="M1 8.5 L8.5 1.5 L16 8.5" fill="none" stroke="#b57a3c" stroke-width="2.2" stroke-linejoin="round"/><path d="M10 10.5 H6 V8 L1.5 11.8 L6 15.5 V13 H10 Z" fill="#6cc050" stroke="#2d8a2a" stroke-width="0.7"/></svg>
<svg style="left:0;top:0" width="1659" height="887" viewBox="0 0 1659 887"><line x1="1211" y1="248" x2="1406" y2="370" stroke="#f47c20" stroke-width="3.1"/></svg>
<div class="a" style="left:1406px;top:357px;width:222px;height:26px;border:3px solid #f47c20"></div>
<div class="a" style="left:545px;top:153px;width:669px;height:604px;border:3px solid #f47c20;background:#cbd8e8"></div>
<div class="a" style="left:548px;top:156px;width:663px;height:598px;border:1px solid #e4ebf4"></div>
<div class="a" style="left:553px;top:162px;font-size:12px;font-weight:bold;color:#15428b">Traitements par lot</div>
<div class="a" style="left:1191px;top:160px;width:15px;height:15px;border:1px solid #99bbe8;border-radius:3px;background:linear-gradient(#fff 40%,#d8e6f8)"></div>
<svg style="left:1193.5px;top:162.5px" width="10" height="10" viewBox="0 0 10 10"><path d="M1.2 1.2 L8.8 8.8 M8.8 1.2 L1.2 8.8" stroke="#15428b" stroke-width="1.1"/></svg>
<div class="a" style="left:553px;top:179px;width:653px;height:537px;border:1px solid #99bbe8;background:#fff"></div>
<div class="fs" style="left:564px;top:197px;width:621px;height:47px"></div>
<div class="lg" style="left:577px;top:192px;font-size:13px">Informations</div>
<svg style="left:577px;top:216px" width="14" height="14" viewBox="0 0 14 14"><defs><radialGradient id="ig" cx="0.4" cy="0.3" r="0.8"><stop offset="0" stop-color="#c8daf0"/><stop offset="1" stop-color="#4a78b8"/></radialGradient></defs><circle cx="7" cy="7" r="6.5" fill="url(#ig)" stroke="#3f6aa8" stroke-width="0.8"/><circle cx="7" cy="3.8" r="1.1" fill="#fff"/><rect x="6" y="5.6" width="2" height="5" fill="#fff"/></svg>
<div class="dt" style="left:596px;top:219px;font-size:11.2px">Votre traitement se fera sur 1411 prêts</div>
<div class="fs" style="left:564px;top:262px;width:621px;height:283px;background:#cfdff6"></div>
<div class="lg" style="left:577px;top:256px;font-size:13px;background:linear-gradient(#fff 50%,#cfdff6 50%)">Traitements</div>
<div class="dt" style="left:576px;top:285px">Traitement</div>
<div class="a" style="left:681px;top:279px;width:480px;height:22px;border:1px solid #b5b8c8;background:#fff"></div>
<div class="dt" style="left:685px;top:286px">Restituer les prêts</div>
<div class="a" style="left:1143px;top:280px;width:17px;height:20px;border-left:1px solid #b5b8c8;background:linear-gradient(#f6f6f6,#dcdcdc)"></div>
<svg style="left:1147px;top:286px" width="9" height="7" viewBox="0 0 9 7"><path d="M1 1 L4.5 5 L8 1" stroke="#15428b" stroke-width="1.8" fill="none"/></svg>
<div class="fs" style="left:586px;top:322px;width:565px;height:163px"></div>
<div class="lg" style="left:599px;top:318px;font-size:12.4px;background:#cfdff6">Options</div>
<div class="cb" style="left:598px;top:341px"></div>
<svg style="left:600px;top:343px" width="9" height="9" viewBox="0 0 9 9"><path d="M1 4.5 L3.5 7 L8 1" stroke="#333" stroke-width="1.6" fill="none"/></svg>
<div class="dt" style="left:615px;top:343px">Exclure les exemplaires ne m'appartenant pas</div>
<div class="cb" style="left:598px;top:359px"></div>
<svg style="left:600px;top:361px" width="9" height="9" viewBox="0 0 9 9"><path d="M1 4.5 L3.5 7 L8 1" stroke="#333" stroke-width="1.6" fill="none"/></svg>
<div class="dt" style="left:615px;top:361px">Exclure les exemplaires attribuables à une réservation</div>
<div class="cb" style="left:598px;top:377px"></div>
<svg style="left:600px;top:379px" width="9" height="9" viewBox="0 0 9 9"><path d="M1 4.5 L3.5 7 L8 1" stroke="#333" stroke-width="1.6" fill="none"/></svg>
<div class="dt" style="left:615px;top:379px">Exclure les exemplaires</div>
<div class="cb" style="left:598px;top:456px"></div>
<div class="dt" style="left:615px;top:458px">Exclure les exemplaires qui ne sont pas en retard</div>
<div class="a" style="left:629px;top:401px;width:4px;height:4px;border-radius:50%;background:#111"></div>
<div class="dt" style="left:645px;top:398px">En nouveauté à afficher au retour</div>
<div class="a" style="left:629px;top:415px;width:4px;height:4px;border-radius:50%;background:#111"></div>
<div class="dt" style="left:645px;top:412px">Avec un statut à afficher au retour</div>
<div class="a" style="left:629px;top:429px;width:4px;height:4px;border-radius:50%;background:#111"></div>
<div class="dt" style="left:645px;top:426px">Avec un piège à afficher au retour</div>
<div class="a" style="left:629px;top:443px;width:4px;height:4px;border-radius:50%;background:#111"></div>
<div class="dt" style="left:645px;top:440px">Manquants dans un récolement</div>
<svg style="left:880px;top:443px" width="56" height="34" viewBox="0 0 56 34"><path d="M1.5 17 L28 1 L28 8 L55 8 L55 25.5 L28 25.5 L28 33 Z" fill="#f47c20"/></svg>
<div class="btn" style="left:1090px;top:503px;width:75px;height:22px;padding-top:5px">Lancer</div>
<div class="btn" style="left:1121px;top:724px;width:75px;height:22px;padding-top:5px">Fermer</div>
</body></html>
